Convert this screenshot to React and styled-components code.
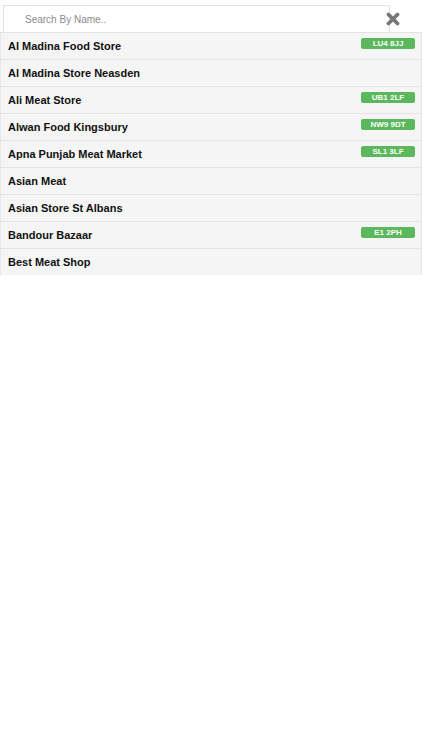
import React, { useState } from "react";
import styled, { createGlobalStyle } from "styled-components";

const GlobalStyle = createGlobalStyle`
    body {
        margin: 0;
        background: #fff;
        font-family: "Liberation Sans", Arial, sans-serif;
    }
`;

const Page = styled.div`
    width: 422px;
`;

const SearchBar = styled.div`
    display: flex;
    align-items: center;
    padding: 5px 0 0 3px;
`;

const SearchInput = styled.input`
    width: 387px;
    height: 27px;
    box-sizing: border-box;
    border: 1px solid #e2e2e2;
    border-bottom: none;
    padding: 0 0 0 21px;
    font-family: "Liberation Sans", Arial, sans-serif;
    font-size: 10px;
    color: #333;
    outline: none;

    &::placeholder {
        color: #8a8a8a;
    }
`;

const ClearButton = styled.button`
    width: 14px;
    height: 27px;
    margin-left: -4px;
    border: none;
    background: none;
    padding: 0;
    display: flex;
    align-items: center;
    justify-content: center;
    cursor: pointer;
`;

const List = styled.ul`
    list-style: none;
    margin: 0;
    padding: 0;
    border-left: 1px solid #e6e6e6;
    border-right: 1px solid #e6e6e6;
`;

const Row = styled.li`
    display: flex;
    align-items: center;
    justify-content: space-between;
    height: 27px;
    box-sizing: border-box;
    padding: 0 6px 0 7px;
    background: #f5f5f5;
    border-top: 1px solid #e4e4e4;
`;

const Name = styled.span`
    font-size: 11px;
    font-weight: bold;
    color: #111;
`;

const Badge = styled.span`
    width: 54px;
    height: 11px;
    margin-top: -5px;
    border-radius: 2px;
    background: #5cb85c;
    color: #fff;
    font-size: 8px;
    font-weight: bold;
    line-height: 11px;
    text-align: center;
`;

const stores = [
    { name: "Al Madina Food Store", code: "LU4 8JJ" },
    { name: "Al Madina Store Neasden" },
    { name: "Ali Meat Store", code: "UB1 2LF" },
    { name: "Alwan Food Kingsbury", code: "NW9 9DT" },
    { name: "Apna Punjab Meat Market", code: "SL1 3LF" },
    { name: "Asian Meat" },
    { name: "Asian Store St Albans" },
    { name: "Bandour Bazaar", code: "E1 2PH" },
    { name: "Best Meat Shop" },
];

export default function App() {
    const [query, setQuery] = useState("");

    return (
        <Page>
            <GlobalStyle />
            <SearchBar>
                <SearchInput
                    placeholder="Search By Name.."
                    value={query}
                    onChange={(e) => setQuery(e.target.value)}
                />
                <ClearButton onClick={() => setQuery("")}>
                    <svg width="14" height="14" viewBox="0 0 14 14">
                        <path d="M2.5 2.5 L11.5 11.5 M11.5 2.5 L2.5 11.5" stroke="#777" strokeWidth="3.8" strokeLinecap="round" />
                    </svg>
                </ClearButton>
            </SearchBar>
            <List>
                {stores
                    .filter((s) => s.name.toLowerCase().includes(query.toLowerCase()))
                    .map((s) => (
                        <Row key={s.name}>
                            <Name>{s.name}</Name>
                            {s.code && <Badge>{s.code}</Badge>}
                        </Row>
                    ))}
            </List>
        </Page>
    );
}
